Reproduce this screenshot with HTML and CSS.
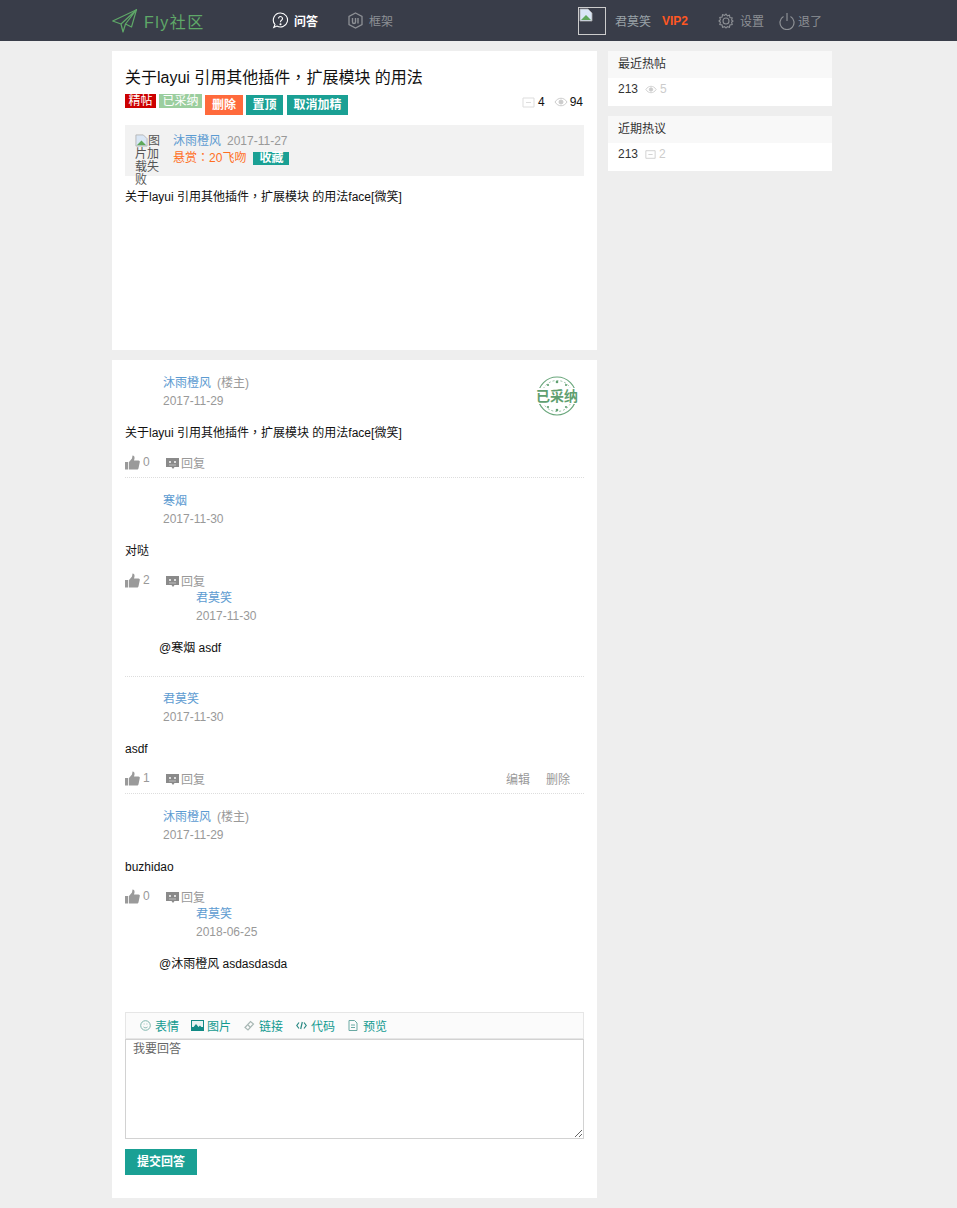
FILE: index.html
```html
<!DOCTYPE html>
<html lang="zh-CN">
<head>
  <meta charset="UTF-8" />
  <title>关于layui 引用其他插件，扩展模块 的用法</title>
  <link rel="stylesheet" href="styles.css">
</head>
<body>
  <!-- top nav -->
  <div class="header">
    <div class="wrap header-inner">
      <a class="logo">
        <svg class="logo-plane" width="26" height="24" viewBox="0 0 26 24" fill="none" stroke="#5FA868" stroke-width="1.200" stroke-linejoin="round"><path d="M.7 12 24.500.7 19.500 18 13.500 15 11 23 9 15Z"/><path d="M9 15 24.500.7 13.500 15"/></svg>
        <span class="logo-text">Fly社区</span>
      </a>
      <a class="nav-item nav-on">
        <svg width="17" height="17" viewBox="0 0 17 17" fill="none" stroke="#fff" stroke-width="1.100"><path d="M8.500 1a7 7 0 1 1-3.600 13L1.800 15.500 3 12.500A7 7 0 0 1 8.500 1Z"/><path d="M6.500 6.500a2 2 0 1 1 3 1.800c-.8.500-1 1-1 2"/><circle cx="8.500" cy="12.300" r=".5"/></svg>
        问答
      </a>
      <a class="nav-item nav-frame">
        <svg width="17" height="17" viewBox="0 0 17 17" fill="none" stroke="#8d9095" stroke-width="1.300"><path d="M8.500 1 15 4.500v8L8.500 16 2 12.500v-8Z"/><path d="M5.500 6v4a1.500 1.500 0 0 0 3 0V6M11 6v5.500" stroke-width="1.400"/></svg>
        框架
      </a>
      <div class="user">
        <div class="user-pic">
          <svg class="broken" width="14" height="14" viewBox="0 0 14 14"><path d="M1 1h8l4 4v8H1Z" fill="#d9e6f5" stroke="#aaa" stroke-width=".8"/><path d="M2 12 7 7l5 5Z" fill="#5fa85a"/></svg>
        </div>
        <span class="user-name">君莫笑</span>
        <span class="user-vip">VIP2</span>
        <a class="user-link user-set">
          <svg width="16" height="16" viewBox="0 0 16 16" fill="none" stroke="#8d9095" stroke-width="1.100"><path d="M8 1l1.300 1.800 2.200-.6.400 2.300 2.300.4-.6 2.200L15 8l-1.400 1.300.6 2.200-2.300.4-.4 2.300-2.200-.6L8 15l-1.300-1.400-2.200.6-.4-2.300-2.300-.4.6-2.200L1 8l1.400-1.300-.6-2.200 2.300-.4.4-2.300 2.200.6Z"/><circle cx="8" cy="8" r="3"/></svg>
          设置
        </a>
        <a class="user-link user-quit">
          <svg width="16" height="18" viewBox="0 0 16 18" fill="none" stroke="#8d9095" stroke-width="1.200"><path d="M4.500 4.500a7 7 0 1 0 7 0"/><path d="M8 1v8"/></svg>
          退了
        </a>
      </div>
    </div>
  </div>

  <div class="wrap main">
    <div class="content">
      <!-- post -->
      <div class="card post">
        <h1 class="post-title">关于layui 引用其他插件<span class="punct" lang="zh-TW">，</span>扩展模块 的用法</h1>
        <div class="post-badges">
          <span class="tag tag-red">精帖</span>
          <span class="tag tag-green">已采纳</span>
          <a class="btn btn-orange">删除</a>
          <a class="btn">置顶</a>
          <a class="btn">取消加精</a>
          <div class="post-stats">
            <svg class="ico-msg" width="13" height="13" viewBox="0 0 13 13" fill="none" stroke="#ddd"><path d="M1 2h11v9H1Z"/><path d="M4 6.500h5"/></svg>
            <span class="stat-num">4</span>
            <svg class="ico-eye" width="14" height="10" viewBox="0 0 14 10" fill="none" stroke="#ccc"><path d="M1 5c3-5 9-5 12 0-3 5-9 5-12 0Z"/><circle cx="7" cy="5" r="2" fill="#ccc"/></svg>
            <span class="stat-num">94</span>
          </div>
        </div>
        <div class="post-meta">
          <div class="post-avatar"><svg class="broken-sm" width="13" height="13" viewBox="0 0 14 14"><path d="M1 1h8l4 4v8H1Z" fill="#d9e6f5" stroke="#aaa" stroke-width=".8"/><path d="M2 12 7 7l5 5Z" fill="#5fa85a"/></svg>图片加载失败</div>
          <div class="post-info">
            <div><a class="link">沐雨橙风</a><span class="post-date">2017-11-27</span></div>
            <div class="post-reward">悬赏<span class="punct" lang="zh-TW">：</span>20飞吻<span class="tag-fav">收藏</span></div>
          </div>
        </div>
        <p class="post-body">关于layui 引用其他插件<span class="punct" lang="zh-TW">，</span>扩展模块 的用法face[微笑]</p>
      </div>

      <!-- answers -->
      <div class="card answers">
        <div class="answer">
          <div class="answer-head"><a class="link">沐雨橙风</a><span class="owner">(楼主)</span><div class="date">2017-11-29</div></div>
          <svg class="stamp" width="42" height="42" viewBox="0 0 42 42" fill="none">
            <circle cx="21" cy="21" r="19" stroke="#6aa77c" stroke-width="1.200"/>
            <circle cx="21" cy="21" r="15.500" stroke="#6aa77c" stroke-width=".7" stroke-dasharray="2 2"/>
            <rect x="0" y="13" width="42" height="16" fill="#fff"/>
            <circle cx="21" cy="7" r="1.300" fill="#5f9f70"/><circle cx="12" cy="10" r="1.100" fill="#5f9f70"/><circle cx="30" cy="10" r="1.100" fill="#5f9f70"/>
            <circle cx="21" cy="35" r="1.300" fill="#5f9f70"/><circle cx="12" cy="32" r="1.100" fill="#5f9f70"/><circle cx="30" cy="32" r="1.100" fill="#5f9f70"/>
            <text x="21" y="26" text-anchor="middle" class="stamp-text">已采纳</text>
          </svg>
          <p class="answer-body">关于layui 引用其他插件<span class="punct" lang="zh-TW">，</span>扩展模块 的用法face[微笑]</p>
          <div class="actions">
            <span class="like"><svg class="thumb" width="15" height="15" viewBox="0 0 15 15" fill="#9a9a9a"><path d="M0 7h3.200v7.500H0ZM4 7l3-3.500L7.500.5c1.500 0 2.300 1.200 2 3L9 5.500h4.500c1 0 1.500.8 1.300 1.600l-1.300 6.200c-.2.800-.7 1.200-1.500 1.200H4Z"/></svg>0</span>
            <span class="reply"><svg class="bot" width="13" height="11" viewBox="0 0 13 11"><path d="M0 0h13v9H8.500L7 11 5.500 9H0Z" fill="#8a8a8a"/><rect x="3" y="3" width="2" height="2" fill="#ddd"/><rect x="8" y="3" width="2" height="2" fill="#ddd"/><rect x="3" y="6.500" width="7" height="1" fill="#bbb"/></svg>回复</span>
          </div>
        </div>

        <div class="answer">
          <div class="answer-head"><a class="link">寒烟</a><div class="date">2017-11-30</div></div>
          <p class="answer-body">对哒</p>
          <div class="actions">
            <span class="like"><svg class="thumb" width="15" height="15" viewBox="0 0 15 15" fill="#9a9a9a"><path d="M0 7h3.200v7.500H0ZM4 7l3-3.500L7.500.5c1.500 0 2.300 1.200 2 3L9 5.500h4.500c1 0 1.500.8 1.300 1.600l-1.300 6.200c-.2.800-.7 1.200-1.500 1.200H4Z"/></svg>2</span>
            <span class="reply"><svg class="bot" width="13" height="11" viewBox="0 0 13 11"><path d="M0 0h13v9H8.500L7 11 5.500 9H0Z" fill="#8a8a8a"/><rect x="3" y="3" width="2" height="2" fill="#ddd"/><rect x="8" y="3" width="2" height="2" fill="#ddd"/><rect x="3" y="6.500" width="7" height="1" fill="#bbb"/></svg>回复</span>
          </div>
          <div class="nested">
            <div class="answer-head"><a class="link">君莫笑</a><div class="date">2017-11-30</div></div>
            <p class="answer-body">@寒烟 asdf</p>
          </div>
        </div>

        <div class="answer answer-tight">
          <div class="answer-head"><a class="link">君莫笑</a><div class="date">2017-11-30</div></div>
          <p class="answer-body">asdf</p>
          <div class="actions">
            <span class="like"><svg class="thumb" width="15" height="15" viewBox="0 0 15 15" fill="#9a9a9a"><path d="M0 7h3.200v7.500H0ZM4 7l3-3.500L7.500.5c1.500 0 2.300 1.200 2 3L9 5.500h4.500c1 0 1.500.8 1.300 1.600l-1.300 6.200c-.2.800-.7 1.200-1.500 1.200H4Z"/></svg>1</span>
            <span class="reply"><svg class="bot" width="13" height="11" viewBox="0 0 13 11"><path d="M0 0h13v9H8.500L7 11 5.500 9H0Z" fill="#8a8a8a"/><rect x="3" y="3" width="2" height="2" fill="#ddd"/><rect x="8" y="3" width="2" height="2" fill="#ddd"/><rect x="3" y="6.500" width="7" height="1" fill="#bbb"/></svg>回复</span>
            <span class="admin"><a>编辑</a><a>删除</a></span>
          </div>
        </div>

        <div class="answer answer-last">
          <div class="answer-head"><a class="link">沐雨橙风</a><span class="owner">(楼主)</span><div class="date">2017-11-29</div></div>
          <p class="answer-body">buzhidao</p>
          <div class="actions">
            <span class="like"><svg class="thumb" width="15" height="15" viewBox="0 0 15 15" fill="#9a9a9a"><path d="M0 7h3.200v7.500H0ZM4 7l3-3.500L7.500.5c1.500 0 2.300 1.200 2 3L9 5.500h4.500c1 0 1.500.8 1.300 1.600l-1.300 6.200c-.2.800-.7 1.200-1.500 1.200H4Z"/></svg>0</span>
            <span class="reply"><svg class="bot" width="13" height="11" viewBox="0 0 13 11"><path d="M0 0h13v9H8.500L7 11 5.500 9H0Z" fill="#8a8a8a"/><rect x="3" y="3" width="2" height="2" fill="#ddd"/><rect x="8" y="3" width="2" height="2" fill="#ddd"/><rect x="3" y="6.500" width="7" height="1" fill="#bbb"/></svg>回复</span>
          </div>
          <div class="nested">
            <div class="answer-head"><a class="link">君莫笑</a><div class="date">2018-06-25</div></div>
            <p class="answer-body">@沐雨橙风 asdasdasda</p>
          </div>
        </div>

        <!-- editor -->
        <div class="editor">
          <div class="toolbar">
            <a><svg width="11" height="11" viewBox="0 0 11 11" fill="none" stroke="#7fb5ad"><circle cx="5.500" cy="5.500" r="4.800"/><path d="M3.500 7c1 1 3 1 4 0M3.700 4h.8M6.500 4h.8"/></svg>表情</a>
            <a class="tb-img"><svg width="13" height="11" viewBox="0 0 13 11"><rect width="13" height="11" fill="#118a85"/><rect x="1" y="1" width="11" height="6" fill="#e7f3f2"/><path d="M1 9 5 4l2.500 3L9 5.500 12 9Z" fill="#118a85"/></svg>图片</a>
            <a><svg width="11" height="11" viewBox="0 0 11 11" fill="none" stroke="#a9b8b5" stroke-width="1.200"><path d="M1 7.500 6.500 1.500l3 2.500L4 10Z"/><path d="M4 5l2.500 2.500"/></svg>链接</a>
            <a><svg width="11" height="9" viewBox="0 0 11 9" fill="none" stroke="#2b8a84" stroke-width="1.200"><path d="M3 1.500 .8 4.500 3 7.500M8 1.500l2.200 3-2.200 3M6.300 1 4.700 8"/></svg>代码</a>
            <a class="tb-file"><svg width="10" height="11" viewBox="0 0 10 11" fill="none" stroke="#6aa9a3"><path d="M1 .5h5.500l2.500 2.500v7.500H1Z"/><path d="M3 5h4M3 7.500h4"/></svg>预览</a>
          </div>
          <textarea class="editor-input" placeholder="我要回答"></textarea>
        </div>
        <a class="btn btn-submit">提交回答</a>
      </div>
    </div>

    <div class="side">
      <div class="side-box">
        <div class="side-title">最近热帖</div>
        <div class="side-row">213<svg class="side-eye" width="12" height="9" viewBox="0 0 14 10" fill="none" stroke="#ccc"><path d="M1 5c3-5 9-5 12 0-3 5-9 5-12 0Z"/><circle cx="7" cy="5" r="2" fill="#ccc"/></svg><span class="side-num">5</span></div>
      </div>
      <div class="side-box">
        <div class="side-title">近期热议</div>
        <div class="side-row">213<svg class="side-msg" width="11" height="11" viewBox="0 0 13 13" fill="none" stroke="#ccc"><path d="M1 2h11v9H1Z"/><path d="M4 6.500h5"/></svg><span class="side-num">2</span></div>
      </div>
    </div>
  </div>
</body>
</html>
```

FILE: styles.css
```css
* {
  box-sizing: border-box;
  margin: 0;
  padding: 0;
}

body {
  background: #eee;
  font-family: "Liberation Sans", "Noto Sans CJK SC", sans-serif;
  font-size: 12px;
  color: #333;
}

.wrap {
  width: 720px;
  margin-left: 112px;
}

/* the centred fullwidth comma and colon */
.punct {
  font-family: "Noto Sans CJK TC", sans-serif;
  line-height: 0;
}

/* header */
.header {
  height: 41px;
  background: #393d49;
}

.header-inner {
  display: flex;
  align-items: center;
  height: 41px;
}

.logo {
  display: flex;
  align-items: center;
  width: 160px;
  color: #5fa868;
}

.logo-text {
  margin-left: 6px;
  font-size: 16px;
  letter-spacing: 1.500px;
}

.nav-item {
  display: flex;
  align-items: center;
  gap: 5px;
  margin-right: 29px;
  color: #8d9095;
}

.nav-on {
  color: #fff;
  font-weight: bold;
}

.user {
  display: flex;
  align-items: center;
  margin-left: auto;
  margin-right: 10px;
  color: #9aa3a8;
}

.user-pic {
  width: 28px;
  height: 28px;
  border: 1px solid #ccc;
  margin-right: 9px;
}

.broken {
  display: block;
}

.user-vip {
  margin-left: 11px;
  margin-right: 30px;
  color: #ff5722;
  font-weight: bold;
}

.user-link {
  display: flex;
  align-items: center;
  gap: 6px;
  color: #8d9095;
}

.user-set {
  margin-right: 15px;
}

.user-quit {
  gap: 3px;
}

/* layout */
.main {
  display: flex;
  align-items: flex-start;
  gap: 11px;
  margin-top: 10px;
  padding-bottom: 10px;
}

.content {
  width: 485px;
}

.card {
  background: #fff;
  padding: 0 13px;
}

.link {
  color: #5c9bd1;
}

/* post */
.post {
  height: 299px;
  padding-top: 16px;
  margin-bottom: 10px;
}

.post-title {
  font-size: 16px;
  font-weight: normal;
  line-height: 22px;
  color: #111;
}

.post-badges {
  display: flex;
  align-items: flex-start;
  height: 20px;
  margin-top: 6px;
}

.tag {
  height: 14px;
  padding: 0 3.500px;
  line-height: 14px;
  color: #fff;
  margin-top: -1px;
  margin-right: 3px;
}

.tag-red {
  background: #c00;
}

.tag-green {
  background: #9bce9e;
}

.btn {
  display: block;
  height: 20px;
  padding: 0 6.500px;
  margin-right: 4px;
  background: #1aa094;
  color: #fff;
  line-height: 20px;
  font-weight: bold;
}

.btn-orange {
  padding: 0 7px;
  margin-right: 3px;
  background: #ff6a3c;
}

.post-stats {
  display: flex;
  align-items: center;
  height: 14px;
  margin-left: auto;
  margin-right: 1px;
  color: #111;
}

.ico-msg {
  margin-right: 3px;
}

.ico-eye {
  margin-left: 9px;
  margin-right: 2px;
}

.post-meta {
  display: flex;
  height: 51px;
  margin-top: 10px;
  background: #f2f2f2;
}

.post-avatar {
  width: 30px;
  height: 30px;
  margin-left: 10px;
  line-height: 13px;
  padding-top: 9px;
  color: #555;
}

.broken-sm {
  vertical-align: -2px;
}

.post-info {
  margin-left: 8px;
  padding-top: 7px;
  line-height: 18px;
}

.post-date {
  margin-left: 6px;
  color: #999;
}

.post-reward {
  color: #ff6f1f;
  line-height: 16px;
}

.tag-fav {
  display: inline-block;
  margin-left: 7px;
  padding: 0 6px;
  height: 13px;
  line-height: 13px;
  background: #1aa094;
  color: #fff;
  font-weight: bold;
}

.post-body {
  margin-top: 12px;
  line-height: 18px;
  color: #111;
}

/* answers */
.answers {
  padding-bottom: 23px;
}

.answer {
  position: relative;
  padding-top: 14px;
  padding-bottom: 5px;
  border-bottom: 1px dotted #ddd;
}

.answer-tight {
  padding-top: 13px;
}

.answer-last {
  border-bottom: 0;
}

.answer-head {
  margin-left: 38px;
  line-height: 18px;
}

.owner {
  margin-left: 6px;
}

.owner,
.date {
  color: #999;
}

.stamp {
  position: absolute;
  top: 15px;
  right: 6px;
}

.stamp-text {
  font-size: 14px;
  font-weight: bold;
  fill: #5f9f70;
}

.answer-body {
  margin-top: 13px;
  line-height: 20px;
  color: #111;
}

.actions {
  display: flex;
  align-items: center;
  height: 20px;
  margin-top: 9px;
  color: #999;
}

.like {
  display: flex;
  align-items: center;
  width: 41px;
}

.thumb {
  margin-right: 3px;
}

.reply {
  display: flex;
  align-items: center;
}

.bot {
  margin-right: 2px;
  margin-top: 2px;
}

.admin {
  display: flex;
  gap: 16px;
  margin-left: auto;
  margin-right: 14px;
}

.nested {
  margin-left: 34px;
  margin-top: -1px;
  padding-bottom: 13px;
}

.nested .answer-head {
  margin-left: 37px;
}

/* editor */
.editor {
  margin-top: 20px;
  background: #fff;
}

.toolbar {
  display: flex;
  align-items: center;
  gap: 13px;
  height: 27px;
  padding-left: 14px;
  background: #fbfbfb;
  border: 1px solid #e6e6e6;
}

.toolbar a {
  display: flex;
  align-items: center;
  gap: 4px;
  color: #129a90;
}

.toolbar .tb-img {
  gap: 3px;
  margin-left: -1px;
}

.toolbar .tb-file {
  gap: 5px;
}

.editor-input {
  display: block;
  width: 100%;
  height: 100px;
  padding: 1px 7px;
  border: 1px solid #d2d2d2;
  font: 12px/16px "Liberation Sans", "Noto Sans CJK SC", sans-serif;
  outline: none;
}

.editor-input::placeholder {
  color: #666;
}

.btn-submit {
  width: 72px;
  height: 26px;
  margin-top: 10px;
  line-height: 26px;
  text-align: center;
  padding: 0;
}

/* sidebar */
.side {
  width: 224px;
}

.side-box {
  background: #fff;
  height: 55px;
  margin-bottom: 10px;
}

.side-title {
  height: 27px;
  padding-left: 10px;
  background: #f8f8f8;
  line-height: 27px;
  color: #333;
}

.side-row {
  display: flex;
  align-items: center;
  padding-left: 10px;
  height: 21px;
  color: #333;
}

.side-eye,
.side-msg {
  margin-left: 7px;
  margin-top: 2px;
  margin-right: 3px;
}

.side-num {
  color: #ccc;
}
```
